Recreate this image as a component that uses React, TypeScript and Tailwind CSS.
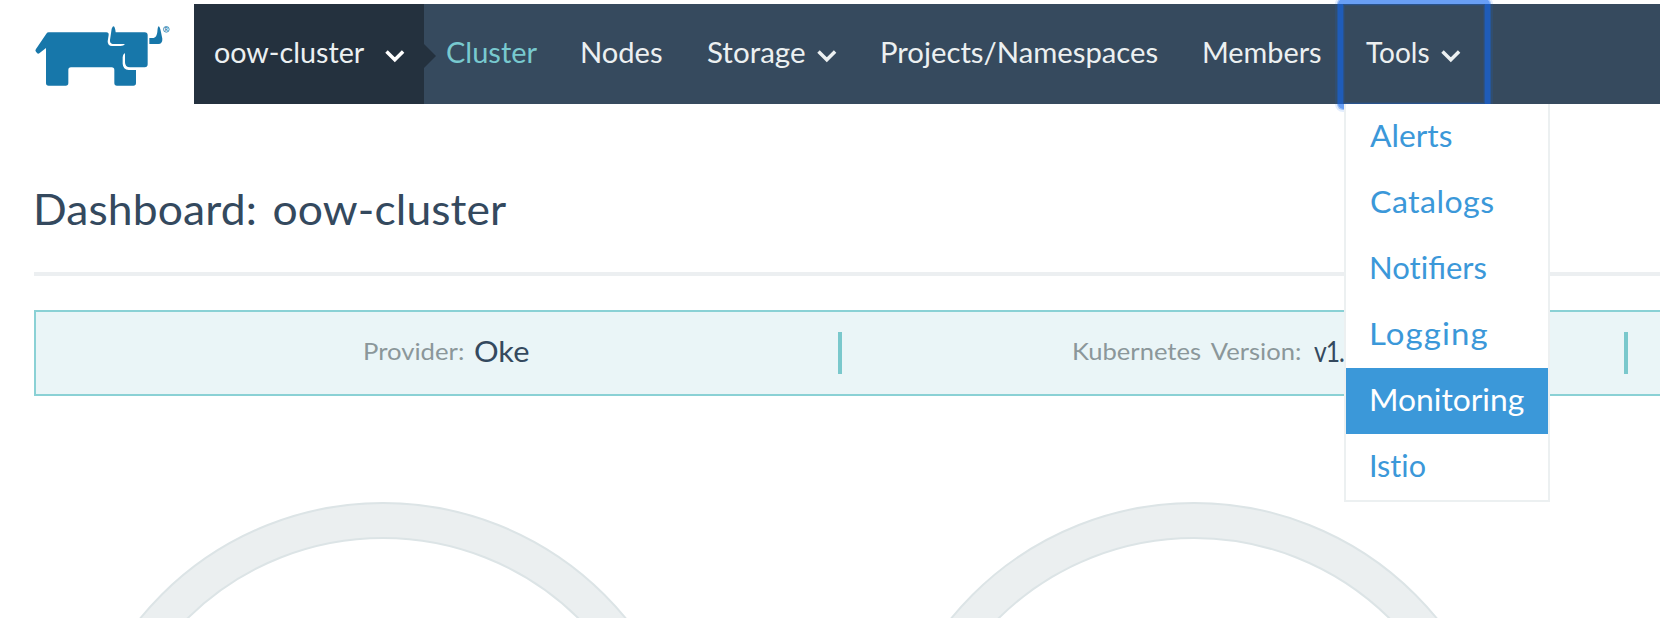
function Chevron({ className = '' }: { className?: string }) {
  return (
    <svg width="20" height="13" viewBox="0 0 20 13" fill="none" className={className}>
      <path d="M1.5 1.6 9.8 9.7 18.1 1.6" stroke="currentColor" strokeWidth="3.5" />
    </svg>
  );
}

function Logo() {
  return (
    <svg width="194" height="100" viewBox="0 12 582 300" fill="#1777aa" className="shrink-0">
      <path d="M146 97H319Q327 97 326 105L323 124Q323 138 336 138H362Q371 138 375 132H338Q329 131 330 120L335 86Q338 79 341 79Q345 80 347 97H434Q443 97 443 106V193Q443 202 434 202H390Q375 202 375 187V159Q368 163 368 172V191Q369 209 386 210H408V249Q408 257 400 257H351Q343 257 343 249V210Q343 202 335 202H213Q205 202 205 210V249Q205 257 197 257H146Q138 257 138 249V144L118 160Q114 163 111 159L107 154Q105 151 108 147L139 101Q142 97 146 97Z" />
      <path d="M448 114H461Q470 112 472 96Q473 80 476 79Q480 80 483 97L487 116Q488 131 475 132H448Z" />
      <circle cx="499" cy="88" r="8.5" fill="none" stroke="#1777aa" strokeWidth="2.4" />
      <text x="499" y="93" fontSize="14" fontWeight="700" textAnchor="middle" fontFamily="Lato, sans-serif">R</text>
    </svg>
  );
}

function Gauge() {
  return (
    <svg width="628" height="116" viewBox="0 0 628 116" className="shrink-0">
      <circle cx="314" cy="314" r="295.5" fill="none" stroke="#dce4e6" strokeWidth="37" />
      <circle cx="314" cy="314" r="295.5" fill="none" stroke="#ebeff0" strokeWidth="33" />
    </svg>
  );
}

// The zero-width non-joiner keeps Lato from joining "t" and "i".
const menu = [
  { label: 'Alerts', pad: 'pl-[24px]', fit: 'scale-x-[1.06]' },
  { label: 'Catalogs', pad: 'pl-[23.5px]', fit: 'scale-x-[1.07] tracking-[0.43px]' },
  { label: 'Not\u200cifiers', pad: 'pl-[23px]', fit: 'scale-x-[1.035]' },
  { label: 'Logging', pad: 'pl-[23px]', fit: 'scale-x-[1.1] tracking-[1px]' },
  { label: 'Monitoring', pad: 'pl-[23px]', fit: 'scale-x-[1.06]', active: true },
  { label: 'Ist\u200cio', pad: 'pl-[23px]', fit: 'scale-x-[1.02]' },
];

export default function App() {
  return (
    <div className="h-[618px] w-[1660px] overflow-hidden bg-white pt-1 font-['Lato',sans-serif] text-[#34495e]">
      <header className="flex h-[100px]">
        <Logo />
        <nav className="relative z-10 flex flex-1 bg-[#364a5e] text-[28px] whitespace-nowrap text-[#ecf0f1]">
          <button className="relative flex w-[230px] items-center bg-[#24313e] pb-1 pl-[20px]">
            <span className="w-[171px] text-left">
              <span className="inline-block origin-left scale-x-[1.025]">oow-cluster</span>
            </span>
            <Chevron className="mt-[8px] text-white" />
            <svg width="12" height="24" viewBox="0 0 12 24" className="absolute top-10 left-full">
              <path d="M0 0 12 12 0 24Z" fill="#24313e" />
            </svg>
          </button>
          <a className="flex w-[134px] items-center pb-1 pl-[22px] text-[#78c9cf]">
            <span className="origin-left scale-x-[1.035]">Cluster</span>
          </a>
          <a className="flex w-[128px] items-center pb-1 pl-[22px]">
            <span className="origin-left scale-x-[1.04]">Nodes</span>
          </a>
          <a className="flex w-[172px] items-center pb-1 pl-[21px]">
            <span className="w-[110px]">
              <span className="inline-block origin-left scale-x-[1.055]">Storage</span>
            </span>
            <Chevron className="mt-[8px]" />
          </a>
          <a className="flex w-[322px] items-center pb-1 pl-[22px]">
            <span className="origin-left scale-x-[1.045]">Projects/Namespaces</span>
          </a>
          <a className="flex w-[164px] items-center pb-1 pl-[22px]">
            <span className="origin-left scale-x-[1.03]">Members</span>
          </a>
          <div className="relative flex w-[140px] items-center pb-1 pl-[22px]">
            <span className="w-[75px]">Tools</span>
            <Chevron className="mt-[8px]" />
            <div className="absolute -top-[5px] -left-[6px] h-[110px] w-[152px] rounded-[5px] border-[5px] border-[#1167ef]/63 shadow-[0_0_0_1px_rgba(17,103,239,0.32),0_0_0_3px_rgba(17,103,239,0.12),inset_0_0_0_1px_rgba(17,103,239,0.25),inset_0_0_0_2px_rgba(17,103,239,0.1)]" />
            <ul className="absolute top-full left-0 w-[206px] border-x-2 border-b-2 border-[#ecf0f1] bg-white text-[30px] text-[#3b98d9]">
              {menu.map((item) => (
                <li
                  key={item.label}
                  className={`flex h-[66px] items-center pb-1 ${item.pad} ${item.active ? 'bg-[#3b98d9] text-white' : ''}`}
                >
                  <span className={`origin-left ${item.fit}`}>{item.label}</span>
                </li>
              ))}
            </ul>
          </div>
        </nav>
      </header>

      <main className="pl-[34px]">
        <div className="flex h-[172px] items-center border-b-4 border-[#eceff1] pt-[42px]">
          <h1 className="-ml-px origin-left scale-x-[1.058] text-[42px] tracking-[0.1px] [word-spacing:4px]">Dashboard: oow-cluster</h1>
        </div>

        <section className="mt-[34px] flex h-[86px] items-center border-y-2 border-l-2 border-[#8ad1d5] bg-[#eaf5f7] whitespace-nowrap">
          <div className="flex w-[802px] items-center pb-1 pl-[327px]">
            <span className="w-[111px] text-[24px] text-[#8b979a]">
              <span className="inline-block origin-left scale-x-[1.07]">Provider:</span>
            </span>
            <span className="origin-left scale-x-[1.1] text-[28px]">Oke</span>
          </div>
          <div className="h-[42px] w-1 bg-[#7ac8cc]" />
          <div className="flex w-[782px] items-center pb-1 pl-[230px]">
            <span className="w-[242px] text-[24px] text-[#8b979a]">
              <span className="inline-block origin-left scale-x-[1.065] [word-spacing:4px]">Kubernetes Version:</span>
            </span>
            <span className="origin-left scale-x-[0.88] text-[28px] tracking-[-1.2px]">v1.</span>
          </div>
          <div className="h-[42px] w-1 bg-[#7ac8cc]" />
        </section>

        <section className="mt-[106px] flex gap-[183px] pl-[34.5px]">
          <Gauge />
          <Gauge />
        </section>
      </main>
    </div>
  );
}
